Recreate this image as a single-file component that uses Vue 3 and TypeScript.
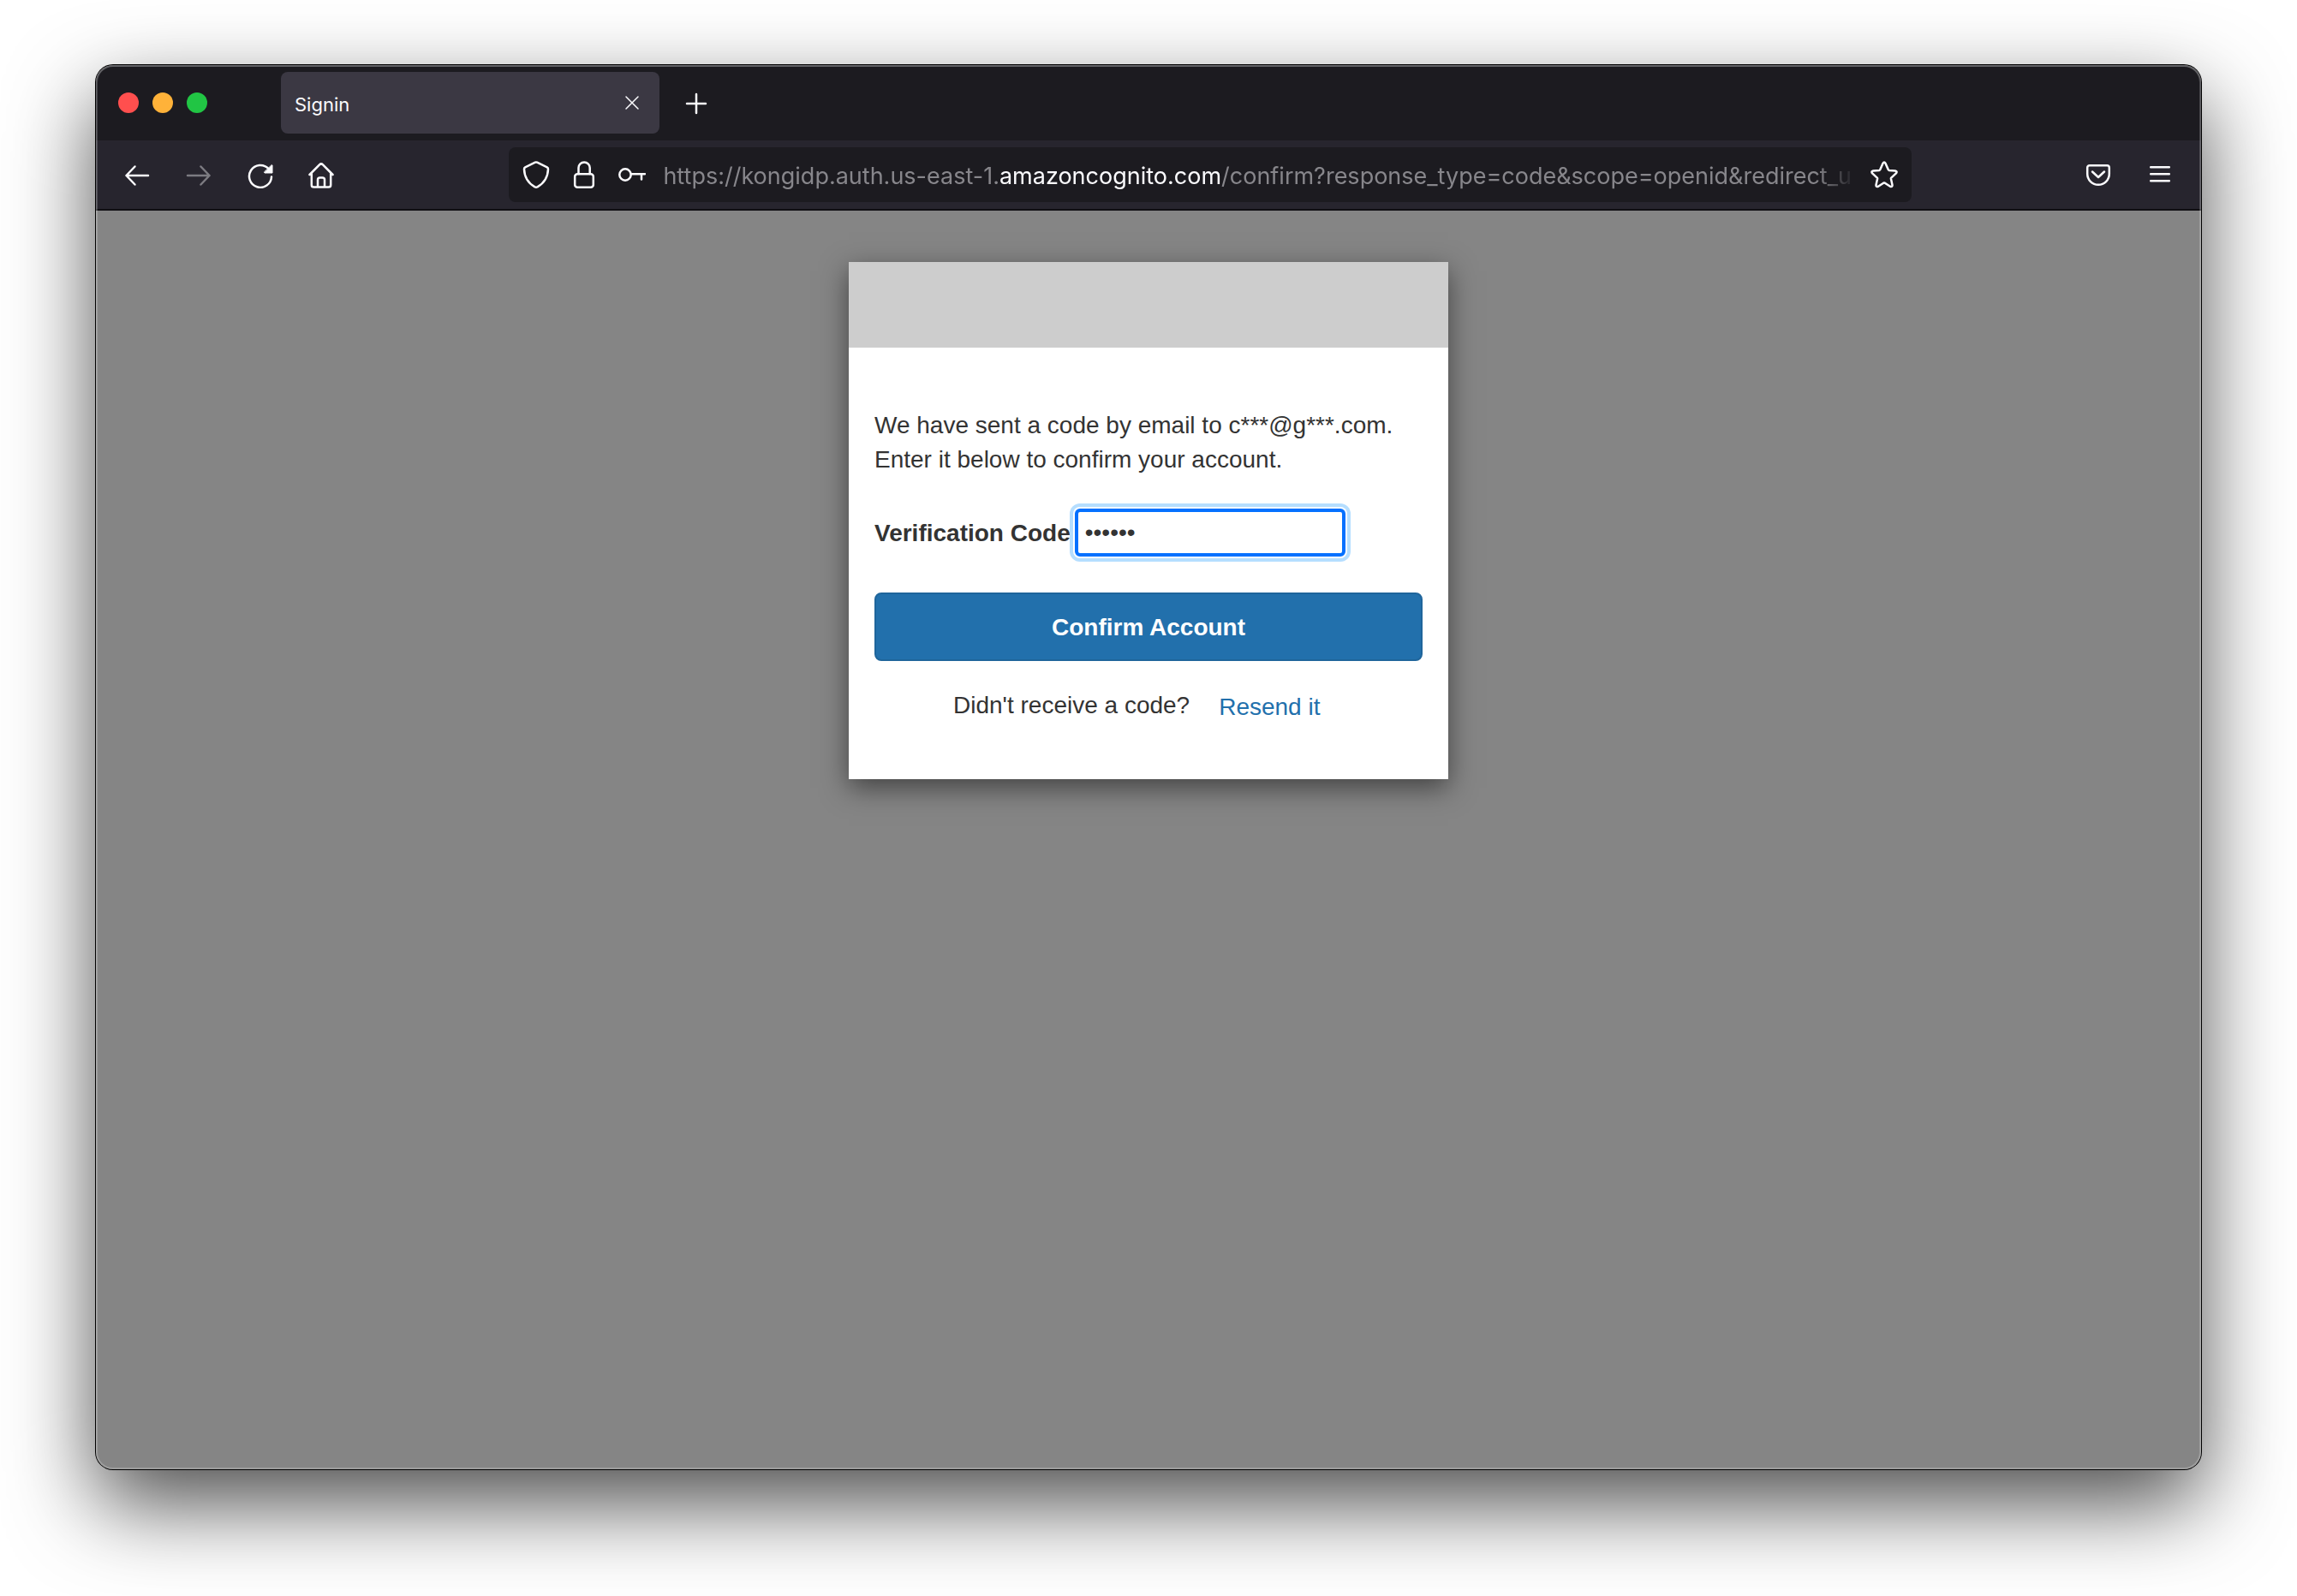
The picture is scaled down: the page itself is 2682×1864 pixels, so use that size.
<script setup lang="ts">
import { ref } from 'vue'

const code = ref('123456')
const url = {
  prefix: 'https://kongidp.auth.us-east-1.',
  domain: 'amazoncognito.com',
  rest: '/confirm?response_type=code&scope=openid&redirect_u',
}
const lights = ['close', 'minimise', 'zoom']
</script>

<template>
  <div class="desktop">
    <div class="window">
      <header class="tabs">
        <div class="lights">
          <button v-for="l in lights" :key="l" type="button" :class="['light', l]" :aria-label="l"></button>
        </div>
        <div class="tab">
          <span class="tab-title">Signin</span>
          <button type="button" class="tab-close" aria-label="Close tab">
            <svg viewBox="0 0 32 32"><path class="thin" d="M9 9l14 14M23 9L9 23" /></svg>
          </button>
        </div>
        <button type="button" class="tool" aria-label="New tab">
          <svg viewBox="0 0 32 32"><path d="M16 6v22M5 17h22" /></svg>
        </button>
      </header>

      <nav class="toolbar">
        <button type="button" class="tool" aria-label="Back">
          <svg viewBox="0 0 32 32"><path d="M29 17H3.500M13.500 6.500L3.500 17l10 10.500" /></svg>
        </button>
        <button type="button" class="tool" aria-label="Forward" disabled>
          <svg viewBox="0 0 32 32"><path d="M3 17h25.500M18.500 6.500L28.500 17l-10 10.500" /></svg>
        </button>
        <button type="button" class="tool" aria-label="Reload">
          <svg viewBox="0 0 32 32">
            <path d="M29 18.500A13 13 0 1 1 25.500 9" />
            <path class="solid" d="M29.500 4.800L30 5v9h-9l-.4-.8z" />
          </svg>
        </button>
        <button type="button" class="tool" aria-label="Home">
          <svg viewBox="0 0 32 32">
            <path d="M1.500 16L13 4.300q2-1.900 4 0L28.500 16M3.800 14.500v13.500a2.600 2.600 0 0 0 2.600 2.600h17.200a2.600 2.600 0 0 0 2.600-2.600V14.500M11 30.500V22a2.500 2.500 0 0 1 2.500-2.500h3A2.500 2.500 0 0 1 19 22v8.500" />
          </svg>
        </button>
        <div class="spring"></div>
        <div class="urlbar">
          <svg viewBox="0 0 32 32">
            <path d="M14.800 1.700L3.200 7.300Q2 8 2 9.500C2.300 18.500 6 25.500 14.500 30.300q1.500 .9 3 0C26 25.500 29.700 18.500 30 9.500Q30 8 28.800 7.300L17.200 1.700Q16 1.100 14.800 1.700z" />
          </svg>
          <svg viewBox="0 0 32 32">
            <rect x="5.200" y="15.300" width="21.600" height="15.400" rx="3" />
            <path d="M9.500 15V8a6.600 6.600 0 0 1 13.200 0v7" />
          </svg>
          <svg viewBox="0 0 32 32">
            <circle cx="8" cy="16" r="6.700" />
            <path d="M15 15.200h16M27 15.500v6" />
          </svg>
          <div class="address" role="textbox" aria-label="Address" contenteditable="true" spellcheck="false">{{ url.prefix }}<span class="domain">{{ url.domain }}</span>{{ url.rest }}</div>
          <svg viewBox="0 0 32 32">
            <path d="M14.400 2.900q1.600-2.600 3.200 0l3.100 7.200q.3 .7 1.100 .8l7.100 .6q2.700 .6 1 2.900l-5.600 5.200q-.5 .5-.4 1.200l1.600 7.200q.2 2.800-2.500 1.800l-6.200-4.100q-.8-.4-1.600 0l-6.200 4.100q-2.700 1-2.500-1.800l1.600-7.200q.1-.7-.4-1.200L2.100 14.400q-1.700-2.300 1-2.900l7.100-.6q.8-.1 1.100-.8z" />
          </svg>
        </div>
        <div class="spring"></div>
        <button type="button" class="tool" aria-label="Save to Pocket">
          <svg viewBox="0 0 32 32">
            <path d="M5.800 5.200h20.400a2.600 2.600 0 0 1 2.600 2.600V15a12.800 12.800 0 0 1-25.600 0V7.800a2.600 2.600 0 0 1 2.600-2.600zM9 12.500l7 6.500 7-6.500" />
          </svg>
        </button>
        <button type="button" class="tool" aria-label="Open menu">
          <svg viewBox="0 0 32 32"><path d="M5.200 7.300h21.600M5.200 15.300h21.600M5.200 23.300h21.600" /></svg>
        </button>
      </nav>

      <main class="page">
        <section class="card">
          <div class="banner"></div>
          <form class="form" @submit.prevent>
            <p class="message">We have sent a code by email to c***@g***.com. Enter it below to confirm your account.</p>
            <div class="field">
              <label for="code">Verification Code</label>
              <input id="code" v-model="code" type="password" autocomplete="off" />
            </div>
            <button type="submit" class="confirm">Confirm Account</button>
            <div class="resend">
              <span>Didn't receive a code?</span>
              <a href="#">Resend it</a>
            </div>
          </form>
        </section>
      </main>
    </div>
  </div>
</template>

<style>
body {
  background: #fff;
}
</style>

<style scoped>
.desktop,
.desktop * {
  box-sizing: border-box;
}
.desktop {
  display: flex;
  min-height: 100vh;
  padding: 76px 112px 148px;
  overflow: hidden;
  font-family: Inter, "Noto Sans", sans-serif;
}
.window {
  position: relative;
  display: flex;
  flex: 1;
  flex-direction: column;
  min-width: 0;
  border-radius: 20px;
  background: #858585;
  box-shadow: 0 0 0 1px #000, 0 40px 100px rgba(0, 0, 0, 0.7);
}
.window::after {
  content: "";
  position: absolute;
  inset: 0;
  border-radius: 20px;
  box-shadow: inset 0 0 0 2px rgba(255, 255, 255, 0.2), inset 0 1px 0 1px rgba(255, 255, 255, 0.15);
  pointer-events: none;
}
button {
  margin: 0;
  padding: 0;
  border: 0;
  background: none;
  color: inherit;
  font: inherit;
}
svg {
  flex: none;
  width: 32px;
  height: 32px;
  fill: none;
  stroke: #fbfbfe;
  stroke-width: 2.5;
  stroke-linecap: round;
  stroke-linejoin: round;
}
.solid {
  fill: #fbfbfe;
  stroke-width: 1;
}
.thin {
  stroke-width: 1.5;
}
.tabs {
  display: flex;
  align-items: center;
  height: 88px;
  padding-left: 26px;
  border-radius: 20px 20px 0 0;
  background: #1c1b20;
}
.lights {
  display: flex;
  gap: 16px;
  margin-right: 86px;
}
.light {
  width: 24px;
  height: 24px;
  border-radius: 50%;
}
.light.close {
  background: #ff4f4e;
}
.light.minimise {
  background: #ffb239;
}
.light.zoom {
  background: #21c544;
}
.tab {
  display: flex;
  align-items: center;
  justify-content: space-between;
  width: 442px;
  height: 72px;
  margin-right: 7px;
  padding: 0 16px;
  border-radius: 8px;
  background: #3b3843;
  color: #fbfbfe;
  font-size: 22px;
  line-height: 32px;
}
.tab-title {
  padding-top: 4px;
}
.tab-close {
  display: flex;
}
.tool {
  display: flex;
  align-items: center;
  justify-content: center;
  width: 72px;
  height: 72px;
}
.tool:disabled {
  opacity: 0.4;
}
.toolbar {
  display: flex;
  align-items: center;
  height: 82px;
  padding: 0 12px;
  border-bottom: 2px solid #100f13;
  background: #27252e;
}
.spring {
  flex: 5;
}
.urlbar {
  display: flex;
  flex: 44;
  align-items: center;
  gap: 24px;
  min-width: 0;
  height: 64px;
  padding: 0 16px;
  border-radius: 8px;
  background: #1c1b20;
}
.address {
  flex: 1;
  min-width: 0;
  margin: 0 -8px 0 -4px;
  padding-top: 4px;
  overflow: hidden;
  color: #87868b;
  font-size: 27px;
  line-height: 40px;
  white-space: nowrap;
  outline: none;
  mask-image: linear-gradient(to left, transparent, #000 48px);
}
.domain {
  color: #fbfbfe;
}
.page {
  flex: 1;
  padding: 60px 0;
}
.card {
  width: 700px;
  margin: 0 auto;
  background: #fff;
  box-shadow: 0 10px 30px rgba(0, 0, 0, 0.5);
  color: #333;
  font-family: "Liberation Sans", Arial, sans-serif;
  font-size: 28px;
  line-height: 40px;
}
.banner {
  height: 100px;
  background: #cdcdcd;
}
.form {
  padding: 71px 30px 64px;
}
.message {
  margin: 0 0 37px;
}
.field {
  display: flex;
  align-items: center;
  gap: 5px;
  margin-bottom: 42px;
}
label {
  padding-top: 2px;
  font-weight: 700;
}
input {
  width: 316px;
  height: 56px;
  padding: 0 8px;
  border: 4px solid #0571ff;
  border-radius: 6px;
  outline: none;
  background: #fff;
  box-shadow: 0 0 0 2px #fff, 0 0 0 6px #b5deff;
  color: #333;
  font: inherit;
}
.confirm {
  width: 100%;
  height: 80px;
  padding-top: 2px;
  border: 2px solid #1f659b;
  border-radius: 8px;
  background: #2270ac;
  color: #fff;
  font-weight: 700;
}
.resend {
  display: flex;
  gap: 34px;
  margin-top: 32px;
  padding-left: 92px;
}
.resend a {
  padding-top: 2px;
  color: #2270ac;
  text-decoration: none;
}
</style>
